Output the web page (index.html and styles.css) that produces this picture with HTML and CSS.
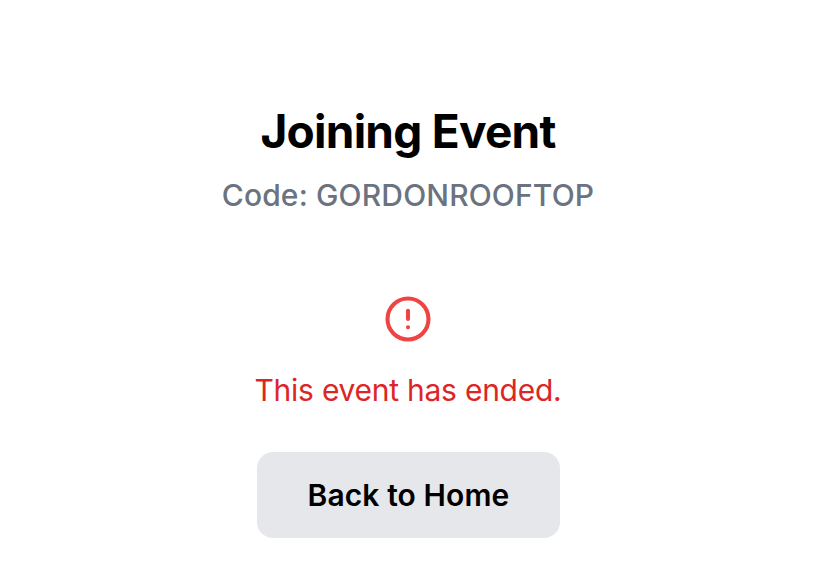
FILE: index.html
```html
<!DOCTYPE html>
<html lang="en">
<head>
<meta charset="utf-8">
<title>Joining Event</title>
<link rel="stylesheet" href="styles.css">
</head>
<body>
<main class="page">
  <h1 class="title">Joining Event</h1>
  <p class="code">Code: GORDONROOFTOP</p>
  <svg class="icon" viewBox="-0.2 -0.2 24.4 24.4" fill="none" stroke="currentColor" stroke-width="2" stroke-linecap="round" stroke-linejoin="round" aria-hidden="true"><circle cx="12" cy="12" r="10"/><path d="M12 8v4M12 16h.01"/></svg>
  <p class="message">This event has ended.</p>
  <button class="button" type="button">Back to Home</button>
</main>
</body>
</html>
```
FILE: styles.css
```css
* { box-sizing: border-box; }
body {
  margin: 0;
  background: #fff;
  font-family: Inter, "Liberation Sans", sans-serif;
}
.page {
  display: flex;
  flex-direction: column;
  align-items: center;
  padding-top: 99px;
}
.title {
  margin: 0;
  font-size: 46px;
  line-height: 64px;
  font-weight: 700;
  letter-spacing: -0.75px;
  color: #000;
  white-space: nowrap;
}
.code {
  margin: 8px 0 0;
  font-size: 30px;
  line-height: 48px;
  font-weight: 450;
  letter-spacing: 0.15px;
  color: #6b7280;
  white-space: nowrap;
}
.icon {
  width: 50px;
  height: 50px;
  margin-top: 75px;
  color: #ef4444;
}
.message {
  margin: 22px 0 0;
  font-size: 30px;
  line-height: 48px;
  letter-spacing: -0.25px;
  color: #dc2626;
  white-space: nowrap;
}
.button {
  margin: 38px 0 0 1px;
  width: 303px;
  height: 86px;
  padding: 0;
  border: 0;
  border-radius: 16px;
  background: #e5e7eb;
  color: #000;
  font: 600 30px/48px Inter, "Liberation Sans", sans-serif;
  letter-spacing: 0.1px;
  white-space: nowrap;
}
```
